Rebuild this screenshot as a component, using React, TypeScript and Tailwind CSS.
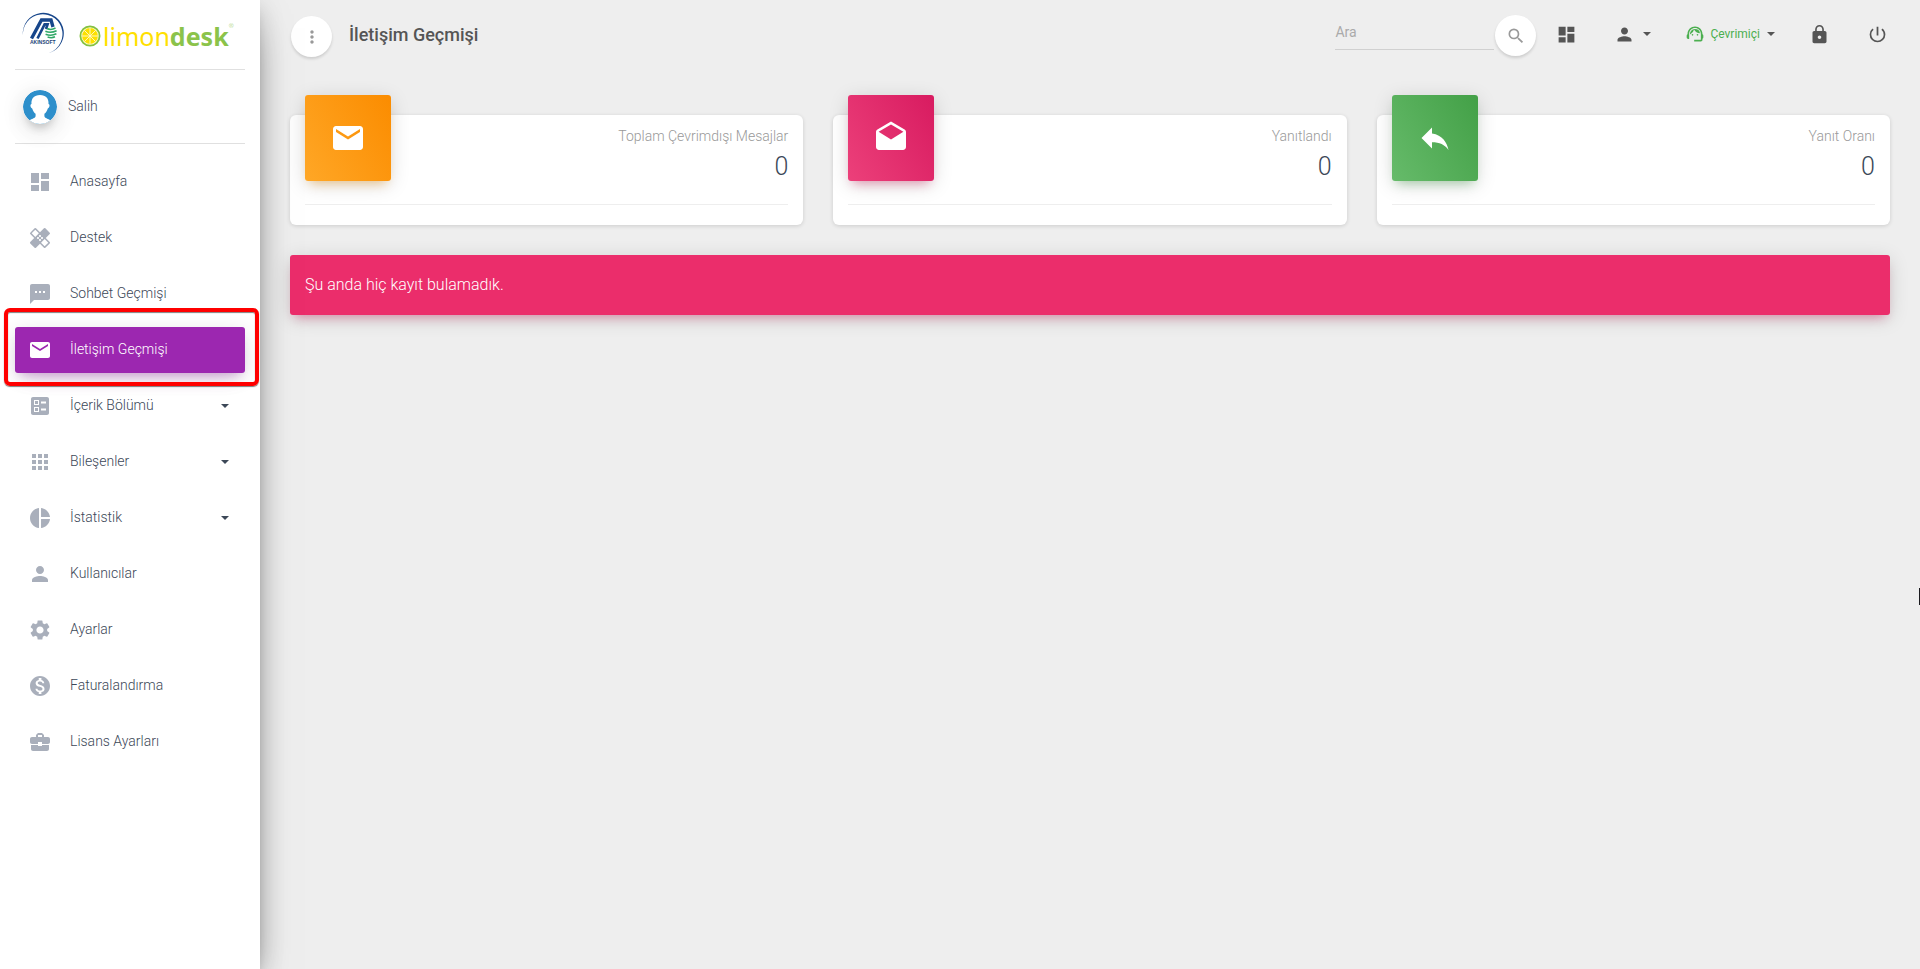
import React from 'react';
import type { IconType } from 'react-icons';
import {
  MdApps,
  MdBallot,
  MdBusinessCenter,
  MdDashboard,
  MdDrafts,
  MdHealing,
  MdLock,
  MdMail,
  MdMonetizationOn,
  MdMoreVert,
  MdPerson,
  MdPieChart,
  MdPowerSettingsNew,
  MdReply,
  MdSearch,
  MdSettings,
  MdSupportAgent,
  MdTextsms,
} from 'react-icons/md';

type NavItem = {
  label: string;
  icon: IconType;
  active?: boolean;
  expandable?: boolean;
};

const navItems: NavItem[] = [
  { label: 'Anasayfa', icon: MdDashboard },
  { label: 'Destek', icon: MdHealing },
  { label: 'Sohbet Geçmişi', icon: MdTextsms },
  { label: 'İletişim Geçmişi', icon: MdMail, active: true },
  { label: 'İçerik Bölümü', icon: MdBallot, expandable: true },
  { label: 'Bileşenler', icon: MdApps, expandable: true },
  { label: 'İstatistik', icon: MdPieChart, expandable: true },
  { label: 'Kullanıcılar', icon: MdPerson },
  { label: 'Ayarlar', icon: MdSettings },
  { label: 'Faturalandırma', icon: MdMonetizationOn },
  { label: 'Lisans Ayarları', icon: MdBusinessCenter },
];

const stats = [
  {
    label: 'Toplam Çevrimdışı Mesajlar',
    value: 0,
    icon: MdMail,
    tile: 'bg-[linear-gradient(60deg,#ffa726,#fb8c00)] shadow-[0_4px_20px_rgba(0,0,0,0.14),0_7px_10px_-5px_rgba(255,152,0,0.4)]',
  },
  {
    label: 'Yanıtlandı',
    value: 0,
    icon: MdDrafts,
    tile: 'bg-[linear-gradient(60deg,#ec407a,#d81b60)] shadow-[0_4px_20px_rgba(0,0,0,0.14),0_7px_10px_-5px_rgba(233,30,99,0.4)]',
  },
  {
    label: 'Yanıt Oranı',
    value: 0,
    icon: MdReply,
    tile: 'bg-[linear-gradient(60deg,#66bb6a,#43a047)] shadow-[0_4px_20px_rgba(0,0,0,0.14),0_7px_10px_-5px_rgba(76,175,80,0.4)]',
  },
];

const Caret = () => (
  <svg width="8" height="4" viewBox="0 0 8 4" fill="currentColor" aria-hidden="true">
    <path d="M0 0H8L4 4Z" />
  </svg>
);

const AkinsoftLogo = () => (
  <svg width="43" height="43" viewBox="0 0 43 43" fill="none" aria-hidden="true">
    <path d="M1 24A20.5 20.5 0 1 1 24 41.6A19.8 19.8 0 1 0 1 24Z" fill="#17468b" />
    <path d="M9.5 26.5L19.5 8H29L31 15" stroke="#17468b" strokeWidth="3.4" />
    <path d="M15.5 26.5L22.6 12.4H25.6L24 17" stroke="#17468b" strokeWidth="2.6" />
    <path
      d="M25 16.5Q29 18.5 33.5 16M23.4 19.3Q28.5 21.6 34.6 18.8M23.6 22.2Q29 24.4 34.4 21.8M25.6 25Q29.5 26.4 33 24.8"
      stroke="#2fa866"
      strokeWidth="1.5"
    />
    <text x="8" y="32" fontSize="5" fontWeight="700" fontFamily="Liberation Sans, sans-serif" fill="#1d3f78">
      AKINSOFT
    </text>
  </svg>
);

const LemonIcon = () => (
  <svg width="22" height="22" viewBox="0 0 22 22" fill="none" aria-hidden="true">
    <circle cx="11" cy="11" r="9.6" fill="#fffbd0" stroke="#84c141" strokeWidth="1.8" />
    <circle cx="11" cy="11" r="7.9" fill="#fde000" />
    <path
      d="M11 3V19M3 11H19M5.3 5.3L16.7 16.7M16.7 5.3L5.3 16.7"
      stroke="#fffbd0"
      strokeWidth="0.9"
    />
  </svg>
);

const Avatar = () => (
  <svg
    width="34"
    height="34"
    viewBox="0 0 34 34"
    className="rounded-full shadow-[0_10px_30px_-12px_rgba(0,0,0,0.42),0_4px_25px_rgba(0,0,0,0.12),0_8px_10px_-5px_rgba(0,0,0,0.2)]"
    aria-hidden="true"
  >
    <circle cx="17" cy="17" r="17" fill="#2d8fcb" />
    <path
      d="M17 5C11 5 8 8.800 8.500 14C6.800 14.200 7.300 17.800 9.200 18.400C10 21 11.200 22.600 12.600 23.800V26.200C12 28.600 8.600 28.400 6.700 30.500C9.500 32.900 13 34 17 34S24.500 32.900 27.300 30.500C25.400 28.400 22 28.600 21.400 26.200V23.800C22.800 22.600 24 21 24.800 18.400C26.700 17.800 27.200 14.200 25.500 14C26 8.800 23 5 17 5Z"
      fill="#fff"
    />
  </svg>
);

const SidebarLink = ({ label, icon: Icon, active, expandable }: NavItem) => (
  <li className="relative">
    <a
      href="#"
      className={
        active
          ? 'flex h-[46px] items-center rounded-[3px] bg-[#9c27b0] px-[13px] text-white shadow-[0_12px_20px_-10px_rgba(156,39,176,0.28),0_4px_20px_rgba(0,0,0,0.12),0_7px_8px_-5px_rgba(156,39,176,0.2)]'
          : 'flex h-[46px] items-center rounded-[3px] px-[13px] text-[#3c4858]'
      }
    >
      <Icon size={24} className={active ? 'text-white' : 'text-[#a9afbb]'} />
      <span className="ml-[18px] flex-1 pb-[2px]">{label}</span>
      {expandable && (
        <span className="mr-[3px]">
          <Caret />
        </span>
      )}
    </a>
    {active && (
      <span className="pointer-events-none absolute -top-[19px] -right-[14px] -bottom-[13px] -left-[11px] z-10 rounded-[6px] border-4 border-[#ff0000] shadow-[0_1px_1px_rgba(0,0,0,0.5),inset_0_1px_1px_rgba(0,0,0,0.5)]" />
    )}
  </li>
);

const Sidebar = () => (
  <aside className="relative z-10 w-[260px] shrink-0 bg-white px-[15px] shadow-[0_16px_38px_-12px_rgba(0,0,0,0.56),0_4px_25px_rgba(0,0,0,0.12),0_8px_10px_-5px_rgba(0,0,0,0.2)]">
    <a href="#" className="flex h-[70px] items-center border-b border-[#e0e0e0] pb-[2px] pl-[7px]">
      <AkinsoftLogo />
      <span className="mt-1 ml-[14px]">
        <LemonIcon />
      </span>
      <span className="mt-1 ml-[2px] flex font-['Noto_Sans',sans-serif] text-[25px] leading-8">
        <span className="font-normal text-[#ffe000]">limon</span>
        <span className="font-bold text-[#8bc34a]">desk</span>
        <span className="text-[6px] leading-3 text-[#8bc34a]">®</span>
      </span>
    </a>
    <a href="#" className="flex h-[74px] items-center border-b border-[#e0e0e0] pl-2 text-[#3c4858]">
      <Avatar />
      <span className="ml-[11px] pb-[2px]">Salih</span>
    </a>
    <nav className="pt-[15px]">
      <ul className="flex flex-col gap-[10px]">
        {navItems.map((item) => (
          <SidebarLink key={item.label} {...item} />
        ))}
      </ul>
    </nav>
  </aside>
);

const Header = () => (
  <header className="flex items-start justify-between pt-[15px] pr-[17px] pl-[31px]">
    <div className="flex items-center pt-px">
      <button
        type="button"
        aria-label="Menü"
        className="flex h-[41px] w-[41px] items-center justify-center rounded-full bg-white text-[#999] shadow-[0_2px_3px_rgba(0,0,0,0.14)]"
      >
        <MdMoreVert size={20} />
      </button>
      <h1 className="ml-[17px] pb-[3px] text-lg font-medium text-[#555]">İletişim Geçmişi</h1>
    </div>

    <div className="flex items-start">
      <form className="flex items-start gap-px" onSubmit={(e) => e.preventDefault()}>
        <input
          type="text"
          aria-label="Ara"
          placeholder="Ara"
          className="h-[35px] w-[159px] border-b border-[#d0d0d0] bg-transparent pb-px text-sm font-normal text-[#555] outline-none placeholder:text-[#aaa]"
        />
        <button
          type="submit"
          aria-label="Ara"
          className="flex h-[41px] w-[41px] items-center justify-center rounded-full bg-white text-[#999] shadow-[0_2px_3px_rgba(0,0,0,0.14)]"
        >
          <MdSearch size={20} />
        </button>
      </form>
      <nav className="ml-[5px] flex h-[38px] items-center gap-[5px] text-[#555]">
        <a href="#" aria-label="Anasayfa" className="px-[15px]">
          <MdDashboard size={21} />
        </a>
        <button type="button" aria-label="Profil" className="flex items-center gap-2 pr-[15px] pl-[17px]">
          <MdPerson size={21} />
          <Caret />
        </button>
        <button type="button" className="flex items-center px-[14px] text-xs font-normal text-[#4caf50]">
          <MdSupportAgent size={20} />
          <span className="ml-[5px]">Çevrimiçi</span>
          <span className="ml-[7px] text-[#555]">
            <Caret />
          </span>
        </button>
        <a href="#" aria-label="Kilitle" className="px-[15px]">
          <MdLock size={21} />
        </a>
        <a href="#" aria-label="Çıkış" className="pr-[15px] pl-[17px]">
          <MdPowerSettingsNew size={21} />
        </a>
      </nav>
    </div>
  </header>
);

const App = () => {
  return (
    <div className="relative flex min-h-screen overflow-hidden bg-[#eee] font-[Roboto,sans-serif] text-sm font-light">
      <Sidebar />
      <div className="min-w-0 flex-1">
        <Header />
        <main className="px-[30px] pt-[58px]">
          <div className="grid grid-cols-3 gap-[30px]">
            {stats.map(({ label, value, icon: Icon, tile }) => (
              <section
                key={label}
                className="rounded-md bg-white px-[15px] pb-5 shadow-[0_1px_4px_rgba(0,0,0,0.14)]"
              >
                <div className="flex items-start justify-between">
                  <div
                    className={`-mt-5 flex h-[86px] w-[86px] items-center justify-center rounded-[3px] text-white ${tile}`}
                  >
                    <Icon size={36} />
                  </div>
                  <div className="pt-[10px] text-right">
                    <p className="leading-[22px] text-[#999]">{label}</p>
                    <p className="text-[25px] leading-10 text-[#3c4858]">{value}</p>
                  </div>
                </div>
                <div className="mt-[17px] border-t border-[#eee]" />
              </section>
            ))}
          </div>

          <div className="mt-[30px] flex h-[60px] items-center rounded-[3px] bg-[#eb2d6b] px-[15px] text-base text-white shadow-[0_4px_20px_rgba(0,0,0,0.14),0_7px_10px_-5px_rgba(233,30,99,0.4)]">
            Şu anda hiç kayıt bulamadık.
          </div>
        </main>
      </div>
      {/* text cursor resting on the window edge */}
      <span className="absolute top-[588px] right-0 h-[17px] w-px bg-[#1a1a1f]" />
    </div>
  );
};

export default App;
